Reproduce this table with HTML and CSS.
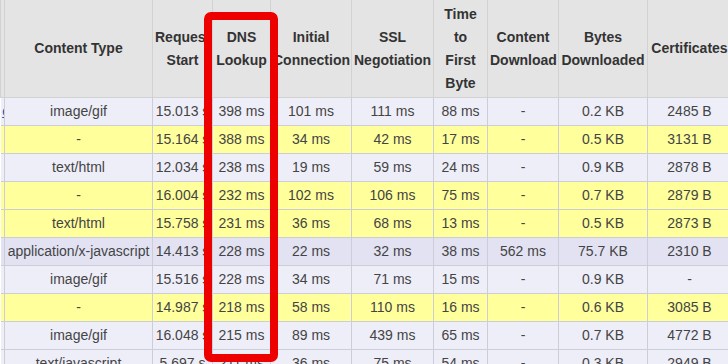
FILE: index.html
```html
<!DOCTYPE html>
<html>
<head>
<meta charset="utf-8">
<link rel="stylesheet" href="styles.css">
</head>
<body>
<div class="wrap">
<table class="grid">
<colgroup>
<col class="c0"><col class="c1"><col class="c2"><col class="c3"><col class="c4"><col class="c5"><col class="c6"><col class="c7"><col class="c8"><col class="c9">
</colgroup>
<thead>
<tr>
<th></th>
<th>Content Type</th>
<th>Request<br>Start</th>
<th>DNS<br>Lookup</th>
<th>Initial<br>Connection</th>
<th>SSL<br>Negotiation</th>
<th>Time<br>to<br>First<br>Byte</th>
<th>Content<br>Download</th>
<th>Bytes<br>Downloaded</th>
<th>Certificates</th>
</tr>
</thead>
<tbody>
<tr class="lav"><td class="url"><span>e</span></td><td>image/gif</td><td>15.013 s</td><td>398 ms</td><td>101 ms</td><td>111 ms</td><td>88 ms</td><td>-</td><td>0.2 KB</td><td>2485 B</td></tr>
<tr class="yel"><td class="url"></td><td>-</td><td>15.164 s</td><td>388 ms</td><td>34 ms</td><td>42 ms</td><td>17 ms</td><td>-</td><td>0.5 KB</td><td>3131 B</td></tr>
<tr class="lav"><td class="url"></td><td>text/html</td><td>12.034 s</td><td>238 ms</td><td>19 ms</td><td>59 ms</td><td>24 ms</td><td>-</td><td>0.9 KB</td><td>2878 B</td></tr>
<tr class="yel"><td class="url"></td><td>-</td><td>16.004 s</td><td>232 ms</td><td>102 ms</td><td>106 ms</td><td>75 ms</td><td>-</td><td>0.7 KB</td><td>2879 B</td></tr>
<tr class="yel"><td class="url"></td><td>text/html</td><td>15.758 s</td><td>231 ms</td><td>36 ms</td><td>68 ms</td><td>13 ms</td><td>-</td><td>0.5 KB</td><td>2873 B</td></tr>
<tr class="hl"><td class="url"></td><td>application/x-javascript</td><td>14.413 s</td><td>228 ms</td><td>22 ms</td><td>32 ms</td><td>38 ms</td><td>562 ms</td><td>75.7 KB</td><td>2310 B</td></tr>
<tr class="lav"><td class="url"></td><td>image/gif</td><td>15.516 s</td><td>228 ms</td><td>34 ms</td><td>71 ms</td><td>15 ms</td><td>-</td><td>0.9 KB</td><td>-</td></tr>
<tr class="yel"><td class="url"></td><td>-</td><td>14.987 s</td><td>218 ms</td><td>58 ms</td><td>110 ms</td><td>16 ms</td><td>-</td><td>0.6 KB</td><td>3085 B</td></tr>
<tr class="lav"><td class="url"></td><td>image/gif</td><td>16.048 s</td><td>215 ms</td><td>89 ms</td><td>439 ms</td><td>65 ms</td><td>-</td><td>0.7 KB</td><td>4772 B</td></tr>
<tr class="lav"><td class="url"></td><td>text/javascript</td><td>5.697 s</td><td>211 ms</td><td>36 ms</td><td>75 ms</td><td>54 ms</td><td>-</td><td>0.3 KB</td><td>2949 B</td></tr>
</tbody>
</table>
<div class="mark"></div>
</div>
</body>
</html>
```
FILE: styles.css
```css
html, body {
  margin: 0;
  padding: 0;
  overflow: hidden;
  background: #ffffff;
}
body {
  font-family: "Liberation Sans", Arial, sans-serif;
}
.wrap {
  position: relative;
  width: 728px;
  height: 364px;
  overflow: hidden;
}
.grid {
  border-collapse: collapse;
  table-layout: fixed;
  width: 731px;
}
.c0 { width: 4px; }
.c1 { width: 148px; }
.c2 { width: 60px; }
.c3 { width: 58px; }
.c4 { width: 81px; }
.c5 { width: 82px; }
.c6 { width: 54px; }
.c7 { width: 71px; }
.c8 { width: 89px; }
.c9 { width: 84px; }
.grid th {
  background: #e4e4e4;
  border: 1px solid #d2d2d2;
  border-top: none;
  color: #333333;
  font-weight: 700;
  font-size: 14px;
  line-height: 23px;
  height: 97px;
  padding: 0 2px;
  text-align: center;
  vertical-align: middle;
  white-space: nowrap;
}
.grid td {
  border: 1px solid #cdcdd8;
  color: #444444;
  font-size: 14px;
  line-height: 17px;
  height: 27px;
  padding: 0 2px;
  text-align: center;
  vertical-align: middle;
  white-space: nowrap;
  overflow: hidden;
}
.grid td.url {
  padding: 0;
  text-align: right;
  border-left: none;
}
.url span {
  color: #1a55b0;
  text-decoration: underline;
  margin-right: -6px;
}
.lav td { background: #eeeef9; }
.yel td { background: #ffff9c; }
.hl td { background: #e2e2f3; }
.mark {
  position: absolute;
  left: 204px;
  top: 12px;
  width: 58px;
  height: 334px;
  border: 8px solid #ec0000;
  border-radius: 7px;
}
```
